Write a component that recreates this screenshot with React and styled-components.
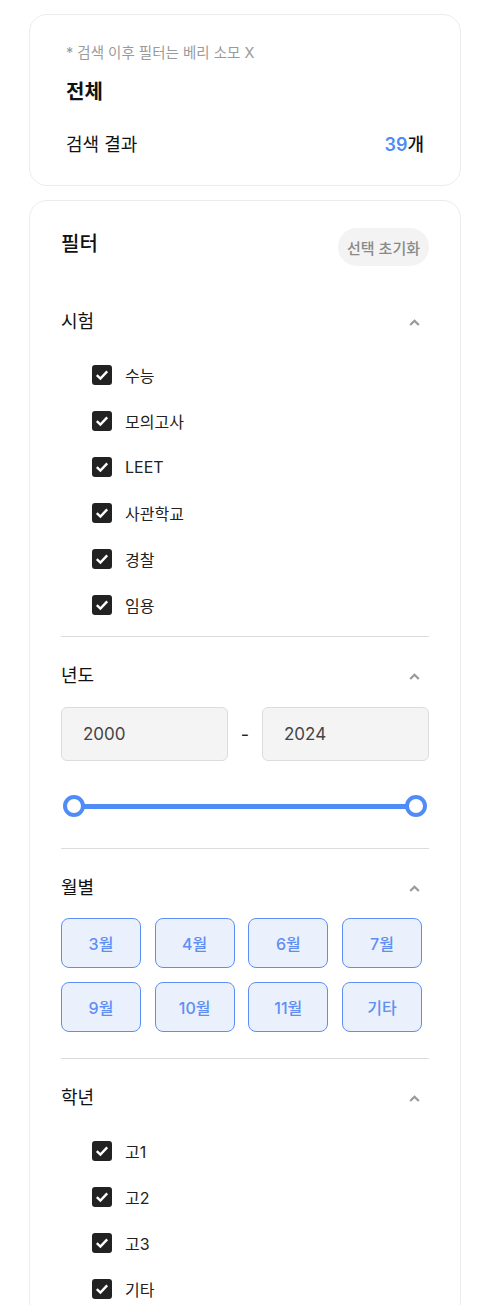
import React from "react";
import styled, { createGlobalStyle } from "styled-components";

const Global = createGlobalStyle`
  html, body { margin: 0; padding: 0; background: #ffffff; }
  body { font-family: "Inter", "Noto Sans CJK KR", sans-serif; color: #111; }
  * { box-sizing: border-box; }
`;

const Page = styled.div`
  display: flex;
  flex-direction: column;
  gap: 14px;
  padding: 14px 0 0 29px;
  width: 461px;
`;

const Card = styled.section`
  background: #fff;
  border: 1px solid #ececec;
  border-radius: 18px;
  padding: ${(p) => p.$pad};
`;

const Note = styled.div`
  font-size: 14.5px;
  line-height: 20px;
  color: #9a9a9a;
`;

const Title = styled.div`
  margin-top: 15px;
  font-size: 20px;
  line-height: 28px;
  font-weight: 700;
`;

const ResultRow = styled.div`
  margin-top: 26px;
  display: flex;
  justify-content: space-between;
  align-items: center;
  font-size: 18px;
  line-height: 26px;
`;

const Count = styled.span`
  font-size: 18px;
  font-weight: 500;
  color: #111;
  & > b { color: #4f8cf7; font-weight: 600; }
`;

const Header = styled.div`
  display: flex;
  justify-content: space-between;
  align-items: center;
  height: 38px;
`;

const HeaderTitle = styled.h2`
  margin: 0 0 6px;
  font-size: 20px;
  line-height: 28px;
  font-weight: 500;
`;

const ResetButton = styled.button`
  height: 38px;
  padding: 0 9px;
  border: none;
  border-radius: 19px;
  background: #f3f3f3;
  color: #8a8a8a;
  font-family: inherit;
  font-size: 15px;
  font-weight: 500;
`;

const Section = styled.div`
  padding: ${(p) => p.$pt}px 0 ${(p) => p.$pb}px;
  border-top: ${(p) => (p.$first ? "none" : "1px solid #dcdcdc")};
  margin-top: ${(p) => (p.$first ? "17px" : "0")};
`;

const SectionHead = styled.div`
  display: flex;
  justify-content: space-between;
  align-items: center;
  height: 24px;
  margin-bottom: ${(p) => p.$mb}px;
`;

const SectionTitle = styled.h3`
  margin: 0;
  font-size: 18px;
  font-weight: 400;
  line-height: 24px;
  color: #111;
`;

const Chevron = styled.svg`
  width: 11px;
  height: 7px;
  margin-right: 9px;
`;

const CheckList = styled.div`
  display: flex;
  flex-direction: column;
  padding-left: 31px;
`;

const CheckRow = styled.label`
  display: flex;
  align-items: center;
  gap: 13px;
  height: 46px;
  font-size: 16px;
  color: #222;
`;

const Box = styled.span`
  width: 20px;
  height: 20px;
  border-radius: 3px;
  background: #222;
  display: flex;
  align-items: center;
  justify-content: center;
`;

const RangeInputs = styled.div`
  display: grid;
  grid-template-columns: 1fr 34px 1fr;
  align-items: center;
`;

const YearInput = styled.div`
  height: 54px;
  border: 1px solid #dcdcdc;
  border-radius: 6px;
  background: #f4f4f4;
  padding-left: 21px;
  display: flex;
  align-items: center;
  font-size: 17px;
  color: #444;
`;

const Dash = styled.span`
  text-align: center;
  font-size: 18px;
  color: #222;
`;

const Slider = styled.div`
  display: flex;
  align-items: center;
  margin-top: 34px;
  padding: 0 2px;
`;

const Thumb = styled.span`
  width: 22px;
  height: 22px;
  border-radius: 50%;
  border: 4px solid #4f8cf7;
  background: #fff;
  flex: none;
  position: relative;
  z-index: 1;
`;

const Track = styled.span`
  flex: 1;
  height: 5px;
  background: #4f8cf7;
  margin: 0 -2px;
`;

const MonthGrid = styled.div`
  display: grid;
  grid-template-columns: repeat(4, 80px);
  justify-content: space-between;
  row-gap: 14px;
  width: 361px;
`;

const MonthButton = styled.button`
  height: 50px;
  border: 1px solid #5b8ff5;
  border-radius: 8px;
  background: #eaf1fd;
  color: #5f8ef3;
  font-family: inherit;
  font-size: 16px;
  font-weight: 500;
`;

const ChevronUp = () => (
  <Chevron viewBox="0 0 11 7">
    <path d="M1.2 6 L5.5 1.8 L9.8 6" fill="none" stroke="#999" strokeWidth="2.2" />
  </Chevron>
);

const Check = ({ label }) => (
  <CheckRow>
    <Box>
      <svg width="16" height="16" viewBox="0 0 16 16">
        <path d="M2.8 8.2 L6.4 11.6 L13.2 4.4" fill="none" stroke="#fff" strokeWidth="2.4" />
      </svg>
    </Box>
    {label}
  </CheckRow>
);

export default function App() {
  const exams = ["수능", "모의고사", "LEET", "사관학교", "경찰", "임용"];
  const months = ["3월", "4월", "6월", "7월", "9월", "10월", "11월", "기타"];
  const grades = ["고1", "고2", "고3", "기타"];
  return (
    <>
      <Global />
      <Page>
        <Card $pad="28px 36px 27px">
          <Note>* 검색 이후 필터는 베리 소모 X</Note>
          <Title>전체</Title>
          <ResultRow>
            <span>검색 결과</span>
            <Count>
              <b>39</b>개
            </Count>
          </ResultRow>
        </Card>
        <Card $pad="27px 31px 0">
          <Header>
            <HeaderTitle>필터</HeaderTitle>
            <ResetButton>선택 초기화</ResetButton>
          </Header>
          <Section $first $pt={27} $pb={8}>
            <SectionHead $mb={18}>
              <SectionTitle>시험</SectionTitle>
              <ChevronUp />
            </SectionHead>
            <CheckList>
              {exams.map((e) => (
                <Check key={e} label={e} />
              ))}
            </CheckList>
          </Section>
          <Section $pt={27} $pb={31}>
            <SectionHead $mb={19}>
              <SectionTitle>년도</SectionTitle>
              <ChevronUp />
            </SectionHead>
            <RangeInputs>
              <YearInput>2000</YearInput>
              <Dash>-</Dash>
              <YearInput>2024</YearInput>
            </RangeInputs>
            <Slider>
              <Thumb />
              <Track />
              <Thumb />
            </Slider>
          </Section>
          <Section $pt={27} $pb={26}>
            <SectionHead $mb={18}>
              <SectionTitle>월별</SectionTitle>
              <ChevronUp />
            </SectionHead>
            <MonthGrid>
              {months.map((m) => (
                <MonthButton key={m}>{m}</MonthButton>
              ))}
            </MonthGrid>
          </Section>
          <Section $pt={27} $pb={7}>
            <SectionHead $mb={18}>
              <SectionTitle>학년</SectionTitle>
              <ChevronUp />
            </SectionHead>
            <CheckList>
              {grades.map((g) => (
                <Check key={g} label={g} />
              ))}
            </CheckList>
          </Section>
        </Card>
      </Page>
    </>
  );
}
